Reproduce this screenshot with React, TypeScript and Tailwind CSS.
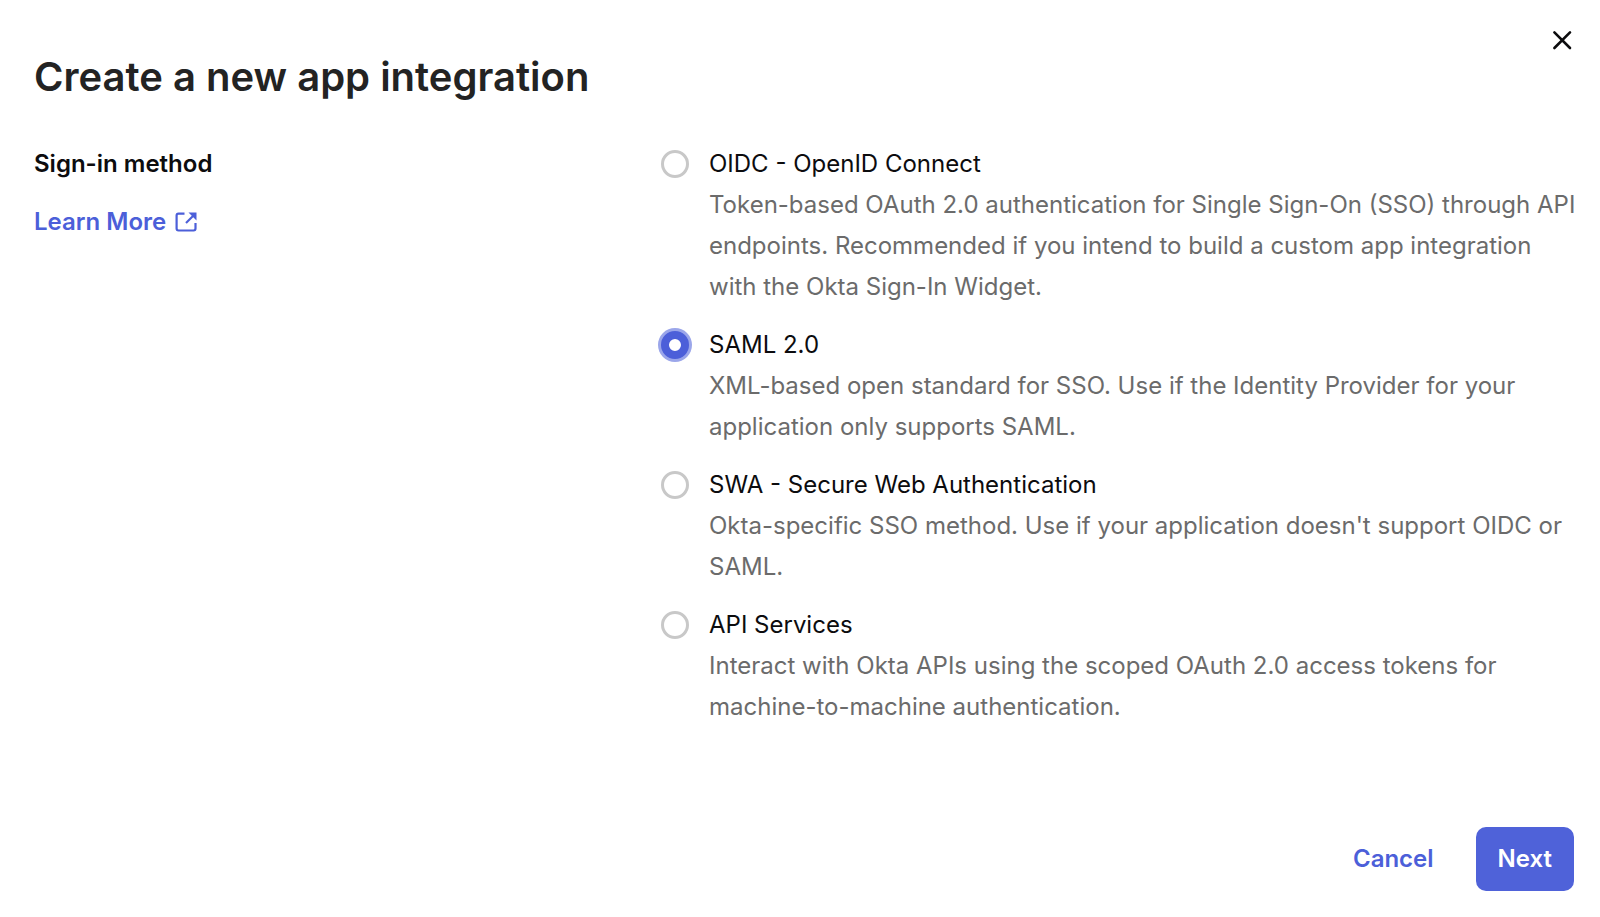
import React, { useState } from "react";

const methods = [
  { id: "oidc", title: "OIDC - OpenID Connect", text: "Token-based OAuth 2.0 authentication for Single Sign-On (SSO) through API endpoints. Recommended if you intend to build a custom app integration with the Okta Sign-In Widget." },
  { id: "saml", title: "SAML 2.0", text: "XML-based open standard for SSO. Use if the Identity Provider for your application only supports SAML." },
  { id: "swa", title: "SWA - Secure Web Authentication", text: "Okta-specific SSO method. Use if your application doesn't support OIDC or SAML." },
  { id: "api", title: "API Services", text: "Interact with Okta APIs using the scoped OAuth 2.0 access tokens for machine-to-machine authentication." },
];

export default function App() {
  const [selected, setSelected] = useState("saml");
  return (
    <main className="relative flex min-h-screen flex-col bg-white pt-12 pr-5 pb-[26px] pl-[34px] font-['Inter',sans-serif] text-[#0c0c0e]">
      <button type="button" aria-label="Close" className="absolute top-6 right-[22px] flex size-8 items-center justify-center">
        <svg viewBox="0 0 32 32" className="size-8" fill="none" stroke="currentColor" strokeWidth="2.6" strokeLinecap="round">
          <path d="M8.4 8.4 24 24M24 8.4 8.4 24" />
        </svg>
      </button>
      <h1 className="text-[40px] leading-[58px] font-semibold text-[#232323]">Create a new app integration</h1>
      <div className="mt-[37px] grid grid-cols-[627px_1fr]">
        <div>
          <h2 id="method" className="text-2xl leading-[41px] font-semibold">Sign-in method</h2>
          <a href="#learn" className="mt-[17px] flex items-center gap-2 text-2xl leading-[41px] font-semibold text-[#4c5fd9]">
            Learn More
            <svg viewBox="0 0 24 24" className="size-6" fill="none" stroke="currentColor" strokeWidth="2.2">
              <path d="M10.5 3.6H4.5Q2.6 3.6 2.6 5.5V18.6Q2.6 20.5 4.5 20.5H19.6Q21.5 20.5 21.5 18.6V13" />
              <path d="M12 13 20 5" />
              <path d="M14.5 2.6H22.5V10.6Z" fill="currentColor" stroke="none" />
            </svg>
          </a>
        </div>
        <div role="radiogroup" aria-labelledby="method" className="flex flex-col gap-[17px]">
          {methods.map((m) => (
            <div key={m.id} className="flex gap-5">
              <div className="flex h-[41px] items-center">
                <input
                  type="radio"
                  name="signin"
                  id={m.id}
                  aria-describedby={`${m.id}-text`}
                  checked={selected === m.id}
                  onChange={() => setSelected(m.id)}
                  className="size-7 appearance-none rounded-full border-3 border-[#c8c8c8] bg-white checked:border-8 checked:border-[#4c5fd9] checked:ring-3 checked:ring-[#9ba6ea]"
                />
              </div>
              <div>
                <label htmlFor={m.id} className="block text-2xl leading-[41px]">{m.title}</label>
                <p id={`${m.id}-text`} className="text-2xl leading-[41px] text-[#6b6b6b]">{m.text}</p>
              </div>
            </div>
          ))}
        </div>
      </div>
      <div className="mt-auto flex justify-end gap-5 pr-1.5">
        <button type="button" className="h-16 px-[22px] text-2xl font-semibold text-[#4c5fd9]">Cancel</button>
        <button type="button" className="h-16 rounded-[10px] bg-[#4f62d9] px-[22px] text-2xl font-semibold text-white">Next</button>
      </div>
    </main>
  );
}
